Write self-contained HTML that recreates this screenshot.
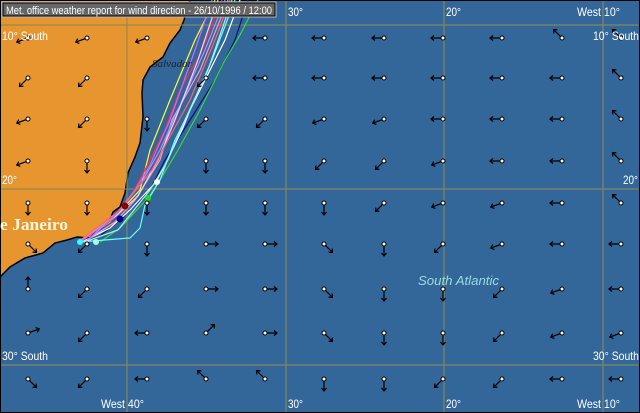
<!DOCTYPE html>
<html><head><meta charset="utf-8"><style>
html,body{margin:0;padding:0;background:#336699;}
svg{display:block}
</style></head><body>
<svg width="640" height="413" viewBox="0 0 640 413" xmlns="http://www.w3.org/2000/svg">
<defs>
<g id="a"><line x1="0" y1="0" x2="12" y2="0" stroke="#000" stroke-width="1.2"/><polyline points="9,-2.5 12,0 9,2.5" fill="none" stroke="#000" stroke-width="1.2"/><circle cx="0" cy="0" r="2" fill="#fff" stroke="#000" stroke-width="1"/></g>
</defs>
<rect width="640" height="413" fill="#336699"/>
<polygon fill="#e6952f" stroke="#000" stroke-width="1.5" points="0,0 190,0 184,20 180,30 170,43 163,57 150,67 143,80 142,93 143,117 140,143 135,157 128,173 125,193 120,207 113,212 110,220 98,230 90,238 77,237 67,240 55,243 43,253 25,258 10,267 0,277"/>
<g stroke="#8a8a5a" stroke-width="1.2" opacity="0.9">
<line x1="127" y1="0" x2="127" y2="413"/><line x1="286" y1="0" x2="286" y2="413"/><line x1="444" y1="0" x2="444" y2="413"/><line x1="603" y1="0" x2="603" y2="413"/>
<line x1="0" y1="25" x2="640" y2="25"/><line x1="0" y1="189" x2="640" y2="189"/><line x1="0" y1="365" x2="640" y2="365"/>
</g>
<rect x="0.5" y="0.5" width="639" height="412" fill="none" stroke="#000" stroke-width="1"/>
<g fill="none" stroke-width="1.2">
<polyline stroke="#10108a" points="82,242 100,236 120,220 150,190 165,160 190,120 215,80 235,40 248,0"/>
<polyline stroke="#33dd33" points="100,242 120,228 148,198 160,180 178,150 200,110 225,60 240,35 258,0"/>
<polyline stroke="#ffffff" points="82,242 110,228 130,210 156,182 165,165 182,130 190,110 205,80 225,40 240,0"/>
<polyline stroke="#ffff33" points="78,242 110,222 140,190 150,150 170,100 195,40 215,0"/>
<polyline stroke="#ff3333" points="80,242 112,220 130,198 145,170 165,130 180,90 200,55 222,0"/>
<polyline stroke="#66ffff" points="80,242 130,238 140,228 145,205 160,180 175,140 190,110 212,60 235,0"/>
<polyline stroke="#ff99cc" points="84,242 115,222 135,200 160,160 172,120 200,70 228,0"/>
<polyline stroke="#9999ff" points="86,242 118,212 140,185 160,150 178,110 205,50 225,0"/>
<polyline stroke="#ffccff" points="82,240 116,216 138,196 158,160 175,120 198,60 218,0"/>
<polyline stroke="#cc66ff" points="80,242 113,218 135,190 150,165 170,120 195,50 212,0"/>
<polyline stroke="#aaeeee" points="84,242 118,230 150,190 168,160 185,120 208,70 232,0"/>
<polyline stroke="#ff6666" points="78,242 120,210 152,170 168,140 190,100 215,40 230,0"/>
</g>
<circle cx="125" cy="206" r="3.5" fill="#880000"/>
<circle cx="120" cy="219" r="3.5" fill="#000088"/>
<circle cx="157" cy="182" r="3" fill="#fff"/>
<circle cx="148" cy="198" r="3" fill="#22dd22"/>
<circle cx="80" cy="242" r="3" fill="#33ffff"/>
<circle cx="96" cy="242" r="3" fill="#aaffdd"/>
<g>
<use href="#a" transform="translate(28,38) rotate(160)"/><use href="#a" transform="translate(87,38) rotate(160)"/><use href="#a" transform="translate(147,38) rotate(160)"/><use href="#a" transform="translate(265,38) rotate(180)"/><use href="#a" transform="translate(324,38) rotate(180)"/><use href="#a" transform="translate(384,38) rotate(180)"/><use href="#a" transform="translate(443,38) rotate(180)"/><use href="#a" transform="translate(502,38) rotate(180)"/><use href="#a" transform="translate(562,38) rotate(225)"/><use href="#a" transform="translate(621,38) rotate(225)"/>
<use href="#a" transform="translate(28,78) rotate(135)"/><use href="#a" transform="translate(87,78) rotate(135)"/><use href="#a" transform="translate(206,78) rotate(135)"/><use href="#a" transform="translate(265,78) rotate(180)"/><use href="#a" transform="translate(324,78) rotate(180)"/><use href="#a" transform="translate(384,78) rotate(180)"/><use href="#a" transform="translate(443,78) rotate(180)"/><use href="#a" transform="translate(502,78) rotate(180)"/><use href="#a" transform="translate(562,78) rotate(180)"/><use href="#a" transform="translate(621,78) rotate(225)"/>
<use href="#a" transform="translate(28,119) rotate(160)"/><use href="#a" transform="translate(87,119) rotate(135)"/><use href="#a" transform="translate(147,119) rotate(90)"/><use href="#a" transform="translate(206,119) rotate(135)"/><use href="#a" transform="translate(265,119) rotate(135)"/><use href="#a" transform="translate(324,119) rotate(160)"/><use href="#a" transform="translate(384,119) rotate(160)"/><use href="#a" transform="translate(443,119) rotate(180)"/><use href="#a" transform="translate(502,119) rotate(180)"/><use href="#a" transform="translate(562,119) rotate(180)"/><use href="#a" transform="translate(621,119) rotate(225)"/>
<use href="#a" transform="translate(28,161) rotate(160)"/><use href="#a" transform="translate(87,161) rotate(90)"/><use href="#a" transform="translate(206,161) rotate(90)"/><use href="#a" transform="translate(265,161) rotate(90)"/><use href="#a" transform="translate(324,161) rotate(135)"/><use href="#a" transform="translate(384,161) rotate(135)"/><use href="#a" transform="translate(443,161) rotate(160)"/><use href="#a" transform="translate(502,161) rotate(180)"/><use href="#a" transform="translate(562,161) rotate(180)"/><use href="#a" transform="translate(621,161) rotate(225)"/>
<use href="#a" transform="translate(28,203) rotate(90)"/><use href="#a" transform="translate(87,203) rotate(90)"/><use href="#a" transform="translate(147,203) rotate(90)"/><use href="#a" transform="translate(206,203) rotate(90)"/><use href="#a" transform="translate(265,203) rotate(90)"/><use href="#a" transform="translate(324,203) rotate(90)"/><use href="#a" transform="translate(384,203) rotate(135)"/><use href="#a" transform="translate(443,203) rotate(160)"/><use href="#a" transform="translate(502,203) rotate(160)"/><use href="#a" transform="translate(562,203) rotate(180)"/><use href="#a" transform="translate(621,203) rotate(225)"/>
<use href="#a" transform="translate(28,244) rotate(45)"/><use href="#a" transform="translate(87,244) rotate(135)"/><use href="#a" transform="translate(147,244) rotate(90)"/><use href="#a" transform="translate(206,244) rotate(0)"/><use href="#a" transform="translate(265,244) rotate(0)"/><use href="#a" transform="translate(324,244) rotate(45)"/><use href="#a" transform="translate(384,244) rotate(90)"/><use href="#a" transform="translate(443,244) rotate(135)"/><use href="#a" transform="translate(502,244) rotate(160)"/><use href="#a" transform="translate(562,244) rotate(180)"/><use href="#a" transform="translate(621,244) rotate(180)"/>
<use href="#a" transform="translate(28,289) rotate(270)"/><use href="#a" transform="translate(87,289) rotate(135)"/><use href="#a" transform="translate(147,289) rotate(135)"/><use href="#a" transform="translate(206,289) rotate(0)"/><use href="#a" transform="translate(265,289) rotate(0)"/><use href="#a" transform="translate(324,289) rotate(45)"/><use href="#a" transform="translate(384,289) rotate(90)"/><use href="#a" transform="translate(443,289) rotate(90)"/><use href="#a" transform="translate(502,289) rotate(135)"/><use href="#a" transform="translate(562,289) rotate(160)"/><use href="#a" transform="translate(621,289) rotate(180)"/>
<use href="#a" transform="translate(28,333) rotate(340)"/><use href="#a" transform="translate(87,333) rotate(135)"/><use href="#a" transform="translate(147,333) rotate(180)"/><use href="#a" transform="translate(206,333) rotate(315)"/><use href="#a" transform="translate(265,333) rotate(0)"/><use href="#a" transform="translate(324,333) rotate(45)"/><use href="#a" transform="translate(384,333) rotate(90)"/><use href="#a" transform="translate(443,333) rotate(90)"/><use href="#a" transform="translate(502,333) rotate(135)"/><use href="#a" transform="translate(562,333) rotate(160)"/><use href="#a" transform="translate(621,333) rotate(160)"/>
<use href="#a" transform="translate(28,379) rotate(45)"/><use href="#a" transform="translate(87,379) rotate(135)"/><use href="#a" transform="translate(147,379) rotate(180)"/><use href="#a" transform="translate(206,379) rotate(225)"/><use href="#a" transform="translate(265,379) rotate(225)"/><use href="#a" transform="translate(324,379) rotate(90)"/><use href="#a" transform="translate(384,379) rotate(90)"/><use href="#a" transform="translate(443,379) rotate(135)"/><use href="#a" transform="translate(502,379) rotate(135)"/><use href="#a" transform="translate(562,379) rotate(180)"/><use href="#a" transform="translate(621,379) rotate(180)"/>
</g>
<rect x="1.5" y="1.5" width="275" height="16" fill="#bbbbbb"/>
<rect x="3" y="3" width="272" height="13" fill="#666666" stroke="#000" stroke-width="1"/>
<g style="font-family:'Liberation Sans',sans-serif">
<text x="6" y="14" font-size="11" fill="#fff" textLength="266" lengthAdjust="spacingAndGlyphs">Met. office weather report for wind direction - 26/10/1996 / 12:00</text>
<g fill="#fff" font-size="12">
<text x="2" y="40" textLength="46" lengthAdjust="spacingAndGlyphs">10° South</text>
<text x="2" y="184" textLength="15" lengthAdjust="spacingAndGlyphs">20°</text>
<text x="2" y="360" textLength="46" lengthAdjust="spacingAndGlyphs">30° South</text>
<text x="288" y="16" textLength="15" lengthAdjust="spacingAndGlyphs">30°</text>
<text x="446" y="16" textLength="15" lengthAdjust="spacingAndGlyphs">20°</text>
<text x="577" y="16" textLength="43" lengthAdjust="spacingAndGlyphs">West 10°</text>
<text x="593" y="40" textLength="46" lengthAdjust="spacingAndGlyphs">10° South</text>
<text x="623" y="184" textLength="15" lengthAdjust="spacingAndGlyphs">20°</text>
<text x="593" y="360" textLength="46" lengthAdjust="spacingAndGlyphs">30° South</text>
<text x="101" y="408" textLength="43" lengthAdjust="spacingAndGlyphs">West 40°</text>
<text x="288" y="408" textLength="15" lengthAdjust="spacingAndGlyphs">30°</text>
<text x="446" y="408" textLength="15" lengthAdjust="spacingAndGlyphs">20°</text>
<text x="577" y="408" textLength="43" lengthAdjust="spacingAndGlyphs">West 10°</text>
</g>
<text x="418" y="285" font-size="13" font-style="italic" fill="#99dddd" textLength="81" lengthAdjust="spacingAndGlyphs">South Atlantic</text>
</g>
<text x="0" y="230" style="font-family:'Liberation Serif',serif;font-weight:bold" font-size="17" fill="#fff6d8" textLength="68" lengthAdjust="spacingAndGlyphs">e Janeiro</text>
<text x="152" y="67" style="font-family:'Liberation Serif',serif;font-style:italic" font-size="11" fill="#222" textLength="40" lengthAdjust="spacingAndGlyphs">Salvador</text>
</svg>
</body></html>
